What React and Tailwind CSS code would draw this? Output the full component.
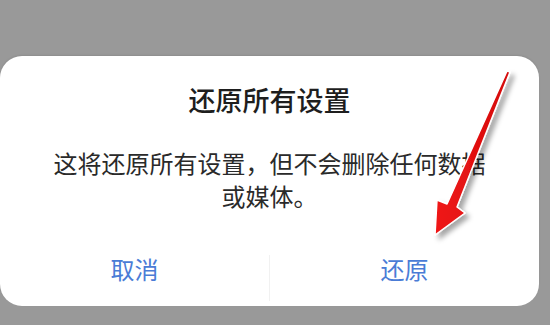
import React from 'react';

const font = { fontFamily: '"Noto Sans CJK SC", "Noto Sans", sans-serif' };

const RedArrow = () => (
    <svg className="absolute left-0 top-0 pointer-events-none" width="550" height="325" viewBox="0 0 550 325">
        <defs>
            <filter id="shadow" x="-50%" y="-50%" width="200%" height="200%">
                <feDropShadow dx="4" dy="4" stdDeviation="2.5" floodColor="#000" floodOpacity="0.35" />
            </filter>
            <linearGradient id="red" x1="0" y1="0" x2="1" y2="0">
                <stop offset="0" stopColor="#f01818" />
                <stop offset="1" stopColor="#d40a0a" />
            </linearGradient>
        </defs>
        <polygon
            points="510,72 457,207 465,213 435,235 437,200 447,204 507,71"
            fill="url(#red)"
            stroke="#fff"
            strokeWidth="1.5"
            strokeLinejoin="round"
            filter="url(#shadow)"
        />
    </svg>
);

const Dialog = () => (
    <div className="w-[539px] h-[250px] bg-white rounded-[22px] flex flex-col items-center shadow-[0_-1px_2px_rgba(0,0,0,0.08)]">
        <div className="pt-[28px] h-[60px] text-[27px] leading-[32px] font-medium text-[#1e1e1e]">
            还原所有设置
        </div>
        <p className="mt-[30px] px-[44px] text-center text-[24px] leading-[33px] text-[#2a2a2a]">
            这将还原所有设置，但不会删除任何数据或媒体。
        </p>
        <div className="mt-auto mb-[7px] w-full h-[60px] flex items-center">
            <button className="flex-1 text-center text-[24px] leading-[32px] text-[#4a7cd6]">取消</button>
            <div className="w-px h-[46px] mt-[18px] bg-[#f1f1f1]" />
            <button className="flex-1 text-center text-[24px] leading-[32px] text-[#4a7cd6]">还原</button>
        </div>
    </div>
);

export default function App() {
    return (
        <div className="relative w-[550px] h-[325px] overflow-hidden bg-[#999999] pt-[56px]" style={font}>
            <Dialog />
            <RedArrow />
        </div>
    );
}
